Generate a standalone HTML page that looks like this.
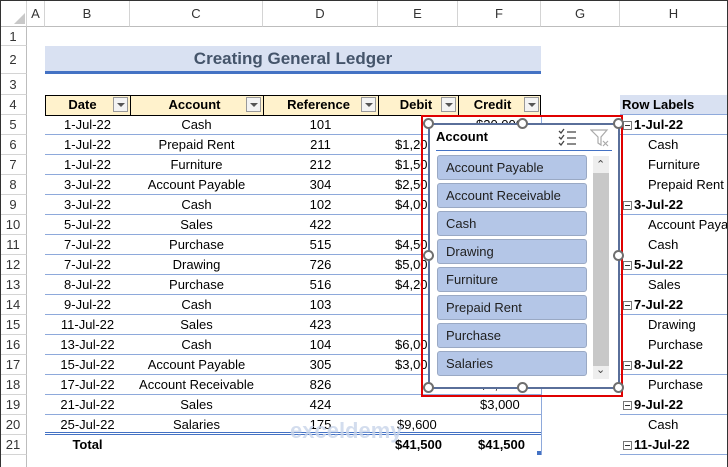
<!DOCTYPE html>
<html><head><style>
*{margin:0;padding:0;box-sizing:border-box}
body{width:728px;height:467px;overflow:hidden;background:#fff;font-family:"Liberation Sans",Calibri,sans-serif;font-size:13px;color:#000;position:relative}
.a{position:absolute}
.ch{position:absolute;top:0;height:27px;line-height:27px;text-align:center;color:#333;background:#fff;border-right:1px solid #d4d4d4;border-bottom:1px solid #bdbdbd;font-size:13px}
.rh{position:absolute;left:0;width:27px;text-align:center;color:#333;border-bottom:1px solid #d4d4d4;border-right:1px solid #bdbdbd;font-size:13px}
.c{position:absolute;height:20px;line-height:20px;white-space:nowrap;overflow:hidden}
.dd{position:absolute;width:15px;height:15px;border:1px solid #999;background:#f3f3f3;top:2px}
.dd:after{content:"";position:absolute;left:3px;top:5px;border-left:4px solid transparent;border-right:4px solid transparent;border-top:4px solid #555}
.line{position:absolute;left:45px;width:496px;height:1px;background:#8ea9db}
.pl{position:absolute;left:620px;width:108px;height:1px;background:#8ea9db}
.it{position:absolute;left:437px;width:150px;height:25px;background:#b4c6e7;border:1px solid #9aa9c4;border-radius:3px;line-height:23px;padding-left:8px;color:#1f1f1f;font-size:13px}
.h{position:absolute;width:11px;height:11px;border:2px solid #6e6e6e;border-radius:50%;background:#fff}
.mb{display:inline-block;width:9px;height:9px;border:1px solid #777;position:relative;top:0;margin-right:2px;vertical-align:middle}
.mb:after{content:"";position:absolute;left:1px;top:3px;width:5px;height:1px;background:#333}
</style></head><body>
<!-- column headers -->
<div class="ch" style="left:0;width:27px;background:#fff"></div>
<div class="a" style="left:14px;top:13px;border-left:11px solid transparent;border-bottom:11px solid #c8c8c8;width:0;height:0"></div>
<div class="ch" style="left:27px;width:18px">A</div>
<div class="ch" style="left:45px;width:85px">B</div>
<div class="ch" style="left:130px;width:133px">C</div>
<div class="ch" style="left:263px;width:115px">D</div>
<div class="ch" style="left:378px;width:80px">E</div>
<div class="ch" style="left:458px;width:83px">F</div>
<div class="ch" style="left:541px;width:79px">G</div>
<div class="ch" style="left:620px;width:108px">H</div>
<!-- row headers -->
<div class="rh" style="top:27px;height:19px;line-height:19px">1</div>
<div class="rh" style="top:46px;height:28px;line-height:28px">2</div>
<div class="rh" style="top:74px;height:21px;line-height:21px">3</div>
<div class="rh" style="top:95px;height:20px;line-height:20px">4</div>
<div class="rh" style="top:115px;height:20px;line-height:20px">5</div>
<div class="rh" style="top:135px;height:20px;line-height:20px">6</div>
<div class="rh" style="top:155px;height:20px;line-height:20px">7</div>
<div class="rh" style="top:175px;height:20px;line-height:20px">8</div>
<div class="rh" style="top:195px;height:20px;line-height:20px">9</div>
<div class="rh" style="top:215px;height:20px;line-height:20px">10</div>
<div class="rh" style="top:235px;height:20px;line-height:20px">11</div>
<div class="rh" style="top:255px;height:20px;line-height:20px">12</div>
<div class="rh" style="top:275px;height:20px;line-height:20px">13</div>
<div class="rh" style="top:295px;height:20px;line-height:20px">14</div>
<div class="rh" style="top:315px;height:20px;line-height:20px">15</div>
<div class="rh" style="top:335px;height:20px;line-height:20px">16</div>
<div class="rh" style="top:355px;height:20px;line-height:20px">17</div>
<div class="rh" style="top:375px;height:20px;line-height:20px">18</div>
<div class="rh" style="top:395px;height:20px;line-height:20px">19</div>
<div class="rh" style="top:415px;height:20px;line-height:20px">20</div>
<div class="rh" style="top:435px;height:20px;line-height:20px">21</div>
<div class="rh" style="top:455px;height:12px;border-bottom:none"></div>

<!-- title -->
<div class="a" style="left:45px;top:46px;width:496px;height:25px;background:#d9e1f2;text-align:center;line-height:26px;font-weight:bold;font-size:17px;color:#44546a">Creating General Ledger</div>
<div class="a" style="left:45px;top:71px;width:496px;height:3px;background:#4472c4"></div>

<!-- header row -->
<div class="a" style="left:45px;top:95px;width:496px;height:21px;background:#fff2cc;border:1px solid #000"></div>
<div class="a" style="left:130px;top:95px;width:1px;height:21px;background:#000"></div>
<div class="a" style="left:263px;top:95px;width:1px;height:21px;background:#000"></div>
<div class="a" style="left:378px;top:95px;width:1px;height:21px;background:#000"></div>
<div class="a" style="left:458px;top:95px;width:1px;height:21px;background:#000"></div>
<div class="c" style="left:45px;top:95px;width:85px;text-align:center;font-weight:bold;padding-right:10px">Date</div>
<div class="c" style="left:130px;top:95px;width:133px;text-align:center;font-weight:bold;padding-right:4px">Account</div>
<div class="c" style="left:263px;top:95px;width:115px;text-align:center;font-weight:bold;padding-right:4px">Reference</div>
<div class="c" style="left:378px;top:95px;width:80px;text-align:center;font-weight:bold;padding-right:4px">Debit</div>
<div class="c" style="left:458px;top:95px;width:83px;text-align:center;font-weight:bold;padding-right:14px">Credit</div>
<div class="dd" style="left:113px;top:97px"></div>
<div class="dd" style="left:246px;top:97px"></div>
<div class="dd" style="left:361px;top:97px"></div>
<div class="dd" style="left:441px;top:97px"></div>
<div class="dd" style="left:524px;top:97px"></div>

<!-- row lines -->
<div class="line" style="top:134px"></div><div class="line" style="top:154px"></div><div class="line" style="top:174px"></div><div class="line" style="top:194px"></div><div class="line" style="top:214px"></div><div class="line" style="top:234px"></div><div class="line" style="top:254px"></div><div class="line" style="top:274px"></div><div class="line" style="top:294px"></div><div class="line" style="top:314px"></div><div class="line" style="top:334px"></div><div class="line" style="top:354px"></div><div class="line" style="top:374px"></div><div class="line" style="top:394px"></div><div class="line" style="top:414px"></div>
<div class="line" style="top:432px;background:#4472c4"></div><div class="line" style="top:434px;background:#4472c4"></div>
<div class="a" style="left:541px;top:115px;width:1px;height:340px;background:#8ea9db"></div>
<div class="a" style="left:537px;top:451px;width:4px;height:4px;background:#4472c4"></div>

<!-- data -->
<div id="d"></div>
<div class="c" style="left:45px;top:115px;width:85px;text-align:center">1-Jul-22</div><div class="c" style="left:130px;top:115px;width:133px;text-align:center">Cash</div><div class="c" style="left:263px;top:115px;width:115px;text-align:center">101</div>
<div class="c" style="left:45px;top:135px;width:85px;text-align:center">1-Jul-22</div><div class="c" style="left:130px;top:135px;width:133px;text-align:center">Prepaid Rent</div><div class="c" style="left:263px;top:135px;width:115px;text-align:center">211</div>
<div class="c" style="left:45px;top:155px;width:85px;text-align:center">1-Jul-22</div><div class="c" style="left:130px;top:155px;width:133px;text-align:center">Furniture</div><div class="c" style="left:263px;top:155px;width:115px;text-align:center">212</div>
<div class="c" style="left:45px;top:175px;width:85px;text-align:center">3-Jul-22</div><div class="c" style="left:130px;top:175px;width:133px;text-align:center">Account Payable</div><div class="c" style="left:263px;top:175px;width:115px;text-align:center">304</div>
<div class="c" style="left:45px;top:195px;width:85px;text-align:center">3-Jul-22</div><div class="c" style="left:130px;top:195px;width:133px;text-align:center">Cash</div><div class="c" style="left:263px;top:195px;width:115px;text-align:center">102</div>
<div class="c" style="left:45px;top:215px;width:85px;text-align:center">5-Jul-22</div><div class="c" style="left:130px;top:215px;width:133px;text-align:center">Sales</div><div class="c" style="left:263px;top:215px;width:115px;text-align:center">422</div>
<div class="c" style="left:45px;top:235px;width:85px;text-align:center">7-Jul-22</div><div class="c" style="left:130px;top:235px;width:133px;text-align:center">Purchase</div><div class="c" style="left:263px;top:235px;width:115px;text-align:center">515</div>
<div class="c" style="left:45px;top:255px;width:85px;text-align:center">7-Jul-22</div><div class="c" style="left:130px;top:255px;width:133px;text-align:center">Drawing</div><div class="c" style="left:263px;top:255px;width:115px;text-align:center">726</div>
<div class="c" style="left:45px;top:275px;width:85px;text-align:center">8-Jul-22</div><div class="c" style="left:130px;top:275px;width:133px;text-align:center">Purchase</div><div class="c" style="left:263px;top:275px;width:115px;text-align:center">516</div>
<div class="c" style="left:45px;top:295px;width:85px;text-align:center">9-Jul-22</div><div class="c" style="left:130px;top:295px;width:133px;text-align:center">Cash</div><div class="c" style="left:263px;top:295px;width:115px;text-align:center">103</div>
<div class="c" style="left:45px;top:315px;width:85px;text-align:center">11-Jul-22</div><div class="c" style="left:130px;top:315px;width:133px;text-align:center">Sales</div><div class="c" style="left:263px;top:315px;width:115px;text-align:center">423</div>
<div class="c" style="left:45px;top:335px;width:85px;text-align:center">13-Jul-22</div><div class="c" style="left:130px;top:335px;width:133px;text-align:center">Cash</div><div class="c" style="left:263px;top:335px;width:115px;text-align:center">104</div>
<div class="c" style="left:45px;top:355px;width:85px;text-align:center">15-Jul-22</div><div class="c" style="left:130px;top:355px;width:133px;text-align:center">Account Payable</div><div class="c" style="left:263px;top:355px;width:115px;text-align:center">305</div>
<div class="c" style="left:45px;top:375px;width:85px;text-align:center">17-Jul-22</div><div class="c" style="left:130px;top:375px;width:133px;text-align:center">Account Receivable</div><div class="c" style="left:263px;top:375px;width:115px;text-align:center">826</div>
<div class="c" style="left:45px;top:395px;width:85px;text-align:center">21-Jul-22</div><div class="c" style="left:130px;top:395px;width:133px;text-align:center">Sales</div><div class="c" style="left:263px;top:395px;width:115px;text-align:center">424</div>
<div class="c" style="left:45px;top:415px;width:85px;text-align:center">25-Jul-22</div><div class="c" style="left:130px;top:415px;width:133px;text-align:center">Salaries</div><div class="c" style="left:263px;top:415px;width:115px;text-align:center">175</div>
<div class="c" style="left:45px;top:435px;width:85px;text-align:center;font-weight:bold">Total</div>

<div class="c" style="left:395px;top:135px">$1,200</div>
<div class="c" style="left:395px;top:155px">$1,500</div>
<div class="c" style="left:395px;top:175px">$2,500</div>
<div class="c" style="left:395px;top:195px">$4,000</div>
<div class="c" style="left:395px;top:235px">$4,500</div>
<div class="c" style="left:395px;top:255px">$5,000</div>
<div class="c" style="left:395px;top:275px">$4,200</div>
<div class="c" style="left:395px;top:335px">$6,000</div>
<div class="c" style="left:395px;top:355px">$3,000</div>
<div class="c" style="left:480px;top:375px">$4,500</div>
<div class="c" style="left:480px;top:395px">$3,000</div>
<div class="c" style="left:397px;top:415px">$9,600</div>
<div class="c" style="left:395px;top:435px;font-weight:bold">$41,500</div>
<div class="c" style="left:478px;top:435px;font-weight:bold">$41,500</div>
<div class="c" style="left:476px;top:115px">$20,000</div>
<div class="a" style="left:290px;top:418px;font-size:22px;font-weight:bold;color:#c9d5ea;opacity:.8">exceldemy</div>

<!-- pivot -->
<div class="a" style="left:620px;top:95px;width:108px;height:20px;background:#d9e1f2;border-bottom:1px solid #8ea9db"></div>
<div class="c" style="left:622px;top:95px;font-weight:bold">Row Labels</div>
<div class="pl" style="top:134px"></div><div class="pl" style="top:214px"></div><div class="pl" style="top:274px"></div><div class="pl" style="top:314px"></div><div class="pl" style="top:374px"></div><div class="pl" style="top:414px"></div><div class="pl" style="top:454px"></div>
<div class="c" style="left:623px;top:115px;font-weight:bold"><span class="mb"></span>1-Jul-22</div>
<div class="c" style="left:648px;top:135px">Cash</div>
<div class="c" style="left:648px;top:155px">Furniture</div>
<div class="c" style="left:648px;top:175px">Prepaid Rent</div>
<div class="c" style="left:623px;top:195px;font-weight:bold"><span class="mb"></span>3-Jul-22</div>
<div class="c" style="left:648px;top:215px">Account Payable</div>
<div class="c" style="left:648px;top:235px">Cash</div>
<div class="c" style="left:623px;top:255px;font-weight:bold"><span class="mb"></span>5-Jul-22</div>
<div class="c" style="left:648px;top:275px">Sales</div>
<div class="c" style="left:623px;top:295px;font-weight:bold"><span class="mb"></span>7-Jul-22</div>
<div class="c" style="left:648px;top:315px">Drawing</div>
<div class="c" style="left:648px;top:335px">Purchase</div>
<div class="c" style="left:623px;top:355px;font-weight:bold"><span class="mb"></span>8-Jul-22</div>
<div class="c" style="left:648px;top:375px">Purchase</div>
<div class="c" style="left:623px;top:395px;font-weight:bold"><span class="mb"></span>9-Jul-22</div>
<div class="c" style="left:648px;top:415px">Cash</div>
<div class="c" style="left:623px;top:435px;font-weight:bold"><span class="mb"></span>11-Jul-22</div>

<!-- slicer -->
<div class="a" style="left:421px;top:115px;width:202px;height:282px;border:2px solid #e00000"></div>
<div class="a" style="left:428px;top:123px;width:192px;height:266px;background:#fff;border:2px solid #5a6f9a"></div>
<div class="c" style="left:436px;top:127px;font-weight:bold">Account</div>
<div class="a" style="left:436px;top:150px;width:176px;height:1px;background:#4472c4"></div>
<svg class="a" style="left:558px;top:128px" width="20" height="18" viewBox="0 0 20 18" fill="none" stroke="#444" stroke-width="1.3"><path d="M1 3l2 2 3-4M1 9l2 2 3-4M1 15l2 2 3-4M9 4h9M9 10h9M9 16h9"/></svg>
<svg class="a" style="left:590px;top:129px" width="20" height="18" viewBox="0 0 20 18" fill="none" stroke="#aaa" stroke-width="1.2"><path d="M1 1h16l-6 7v8l-3-2v-6z"/><path d="M13 12l5 5M18 12l-5 5"/></svg>
<div class="a" style="left:593px;top:156px;width:16px;height:223px;background:#eeeeee"></div>
<div class="a" style="left:593px;top:173px;width:16px;height:193px;background:#c8c8c8"></div>
<div class="a" style="left:596px;top:158px;font-size:11px;color:#444">&#8963;</div>
<div class="a" style="left:596px;top:363px;font-size:11px;color:#444">&#8964;</div>
<div class="it" style="top:155px">Account Payable</div>
<div class="it" style="top:183px">Account Receivable</div>
<div class="it" style="top:211px">Cash</div>
<div class="it" style="top:239px">Drawing</div>
<div class="it" style="top:267px">Furniture</div>
<div class="it" style="top:295px">Prepaid Rent</div>
<div class="it" style="top:323px">Purchase</div>
<div class="it" style="top:351px">Salaries</div>
<div class="h" style="left:423px;top:118px"></div>
<div class="h" style="left:517px;top:118px"></div>
<div class="h" style="left:613px;top:118px"></div>
<div class="h" style="left:423px;top:250px"></div>
<div class="h" style="left:613px;top:250px"></div>
<div class="h" style="left:423px;top:382px"></div>
<div class="h" style="left:517px;top:382px"></div>
<div class="h" style="left:613px;top:382px"></div>
<div class="a" style="left:0;top:0;width:728px;height:467px;border:1px solid #333;border-bottom:none;pointer-events:none"></div>
</body></html>
